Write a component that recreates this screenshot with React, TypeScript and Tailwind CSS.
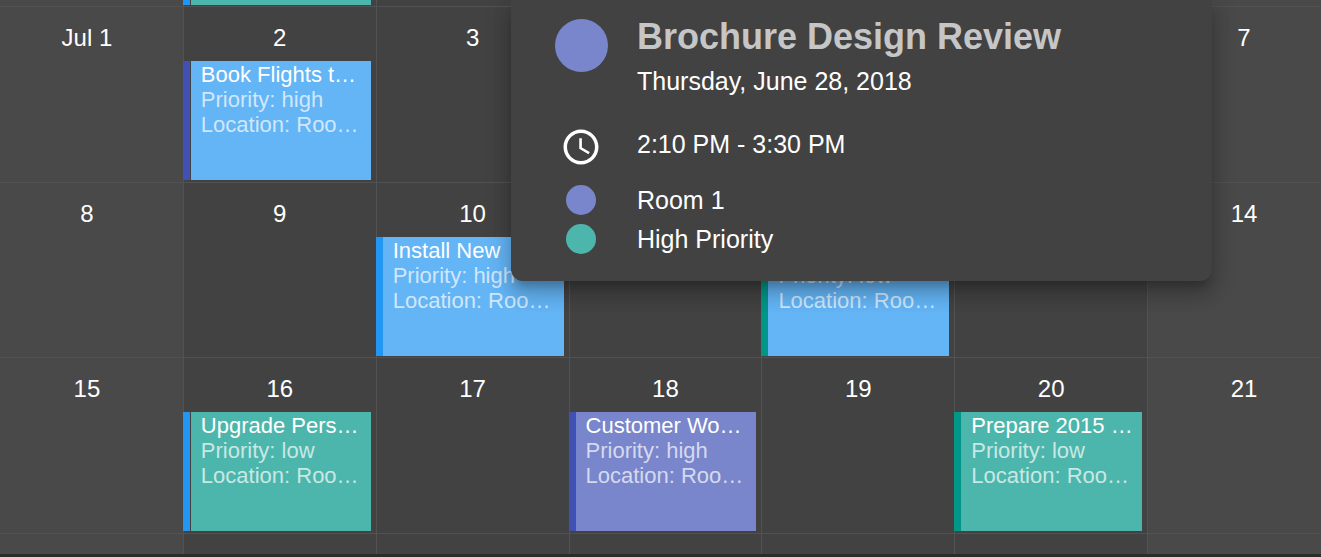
type Tone = 'blue' | 'indigo' | 'teal';

interface CalendarEvent {
  title?: string;
  priority: 'high' | 'low';
  location: string;
  body: Tone;
  bar: Tone;
  split?: boolean;
}

interface Day {
  label?: string;
  event?: CalendarEvent;
}

const bodyTone: Record<Tone, string> = {
  blue: 'bg-[#64b5f6]',
  indigo: 'bg-[#7986cb]',
  teal: 'bg-[#4db6ac]',
};

const barTone: Record<Tone, string> = {
  blue: 'bg-[#2196f3]',
  indigo: 'bg-[#3f51b5]',
  teal: 'bg-[#009688]',
};

const weeks: { height: string; days: Day[] }[] = [
  {
    height: 'h-[176px]',
    days: [
      { label: 'Jul 1' },
      {
        label: '2',
        event: { title: 'Book Flights t…', priority: 'high', location: 'Roo…', body: 'blue', bar: 'indigo', split: true },
      },
      { label: '3' },
      {},
      {},
      {},
      { label: '7' },
    ],
  },
  {
    height: 'h-[175px]',
    days: [
      { label: '8' },
      { label: '9' },
      { label: '10', event: { title: 'Install New', priority: 'high', location: 'Roo…', body: 'blue', bar: 'blue' } },
      {},
      { event: { priority: 'low', location: 'Roo…', body: 'blue', bar: 'teal' } },
      {},
      { label: '14' },
    ],
  },
  {
    height: 'h-[176px]',
    days: [
      { label: '15' },
      {
        label: '16',
        event: { title: 'Upgrade Pers…', priority: 'low', location: 'Roo…', body: 'teal', bar: 'blue', split: true },
      },
      { label: '17' },
      { label: '18', event: { title: 'Customer Wo…', priority: 'high', location: 'Roo…', body: 'indigo', bar: 'indigo' } },
      { label: '19' },
      { label: '20', event: { title: 'Prepare 2015 …', priority: 'low', location: 'Roo…', body: 'teal', bar: 'teal' } },
      { label: '21' },
    ],
  },
];

const columns = [0, 1, 2, 3, 4, 5, 6];

function cellTone(column: number) {
  return column === 0 || column === 6 ? 'bg-[#494949]' : 'bg-[#424242]';
}

function EventCard({ event }: { event: CalendarEvent }) {
  return (
    <div className={`-ml-px mr-[5px] flex h-[119px] ${event.split ? 'gap-px' : ''}`}>
      <div className={`w-[7px] shrink-0 ${barTone[event.bar]}`} />
      <div
        className={`min-w-0 flex-1 overflow-hidden whitespace-nowrap pl-2.5 pt-px text-[22px] leading-[25px] text-white/70 ${bodyTone[event.body]}`}
      >
        <p className="min-h-[25px] text-white">{event.title}</p>
        <p>Priority: {event.priority}</p>
        <p>Location: {event.location}</p>
      </div>
    </div>
  );
}

function MonthTable() {
  return (
    <div className="-ml-2.5 -mr-[19px]">
      <table className="w-full table-fixed border-separate border-spacing-0">
        <tbody>
          <tr>
            {columns.map((column) => (
              <td key={column} className={`h-1.5 border-l border-[#525252] p-0 align-top ${cellTone(column)}`}>
                {column === 1 && (
                  <div className="-ml-px mr-[5px] flex h-[5px] gap-px">
                    <div className="w-[7px] bg-[#2196f3]" />
                    <div className="flex-1 bg-[#4db6ac]" />
                  </div>
                )}
              </td>
            ))}
          </tr>
          {weeks.map((week) => (
            <tr key={week.days[0].label}>
              {week.days.map((day, column) => (
                <td
                  key={column}
                  className={`border-l border-t border-[#525252] p-0 pt-4 align-top ${week.height} ${cellTone(column)}`}
                >
                  <div className="mb-2 h-[30px] text-center text-2xl/[30px]">{day.label}</div>
                  {day.event && <EventCard event={day.event} />}
                </td>
              ))}
            </tr>
          ))}
          <tr>
            {columns.map((column) => (
              <td key={column} className={`h-[21px] border-l border-t border-[#525252] p-0 ${cellTone(column)}`} />
            ))}
          </tr>
        </tbody>
      </table>
    </div>
  );
}

function ClockIcon() {
  return (
    <svg viewBox="0 0 24 24" className="size-[42px] fill-current" aria-hidden="true">
      <path d="M11.99 2C6.47 2 2 6.48 2 12s4.47 10 9.99 10C17.52 22 22 17.52 22 12S17.52 2 11.99 2zM12 20c-4.42 0-8-3.58-8-8s3.58-8 8-8 8 3.58 8 8-3.58 8-8 8z" />
      <path d="M12.5 7H11v6l5.25 3.15.75-1.23-4.5-2.67z" />
    </svg>
  );
}

function Tooltip() {
  return (
    <section
      aria-label="Appointment details"
      className="absolute left-[511px] top-0 w-[701px] rounded-b-xl bg-[#424242] pb-[27px] pl-3.5 pt-[17px] text-[25px] leading-[30px] shadow-[0_9px_9px_-5px_rgba(0,0,0,0.2),0_14px_18px_2px_rgba(0,0,0,0.14),0_5px_24px_4px_rgba(0,0,0,0.12)]"
    >
      <div className="flex items-start">
        <div className="flex w-28 justify-center pt-0.5">
          <span className="size-[53px] rounded-full bg-[#7986cb]" />
        </div>
        <div>
          <h2 className="text-4xl/10 font-bold text-[#c6c6c6]">Brochure Design Review</h2>
          <p className="mt-[9px]">Thursday, June 28, 2018</p>
        </div>
      </div>
      <div className="mt-[30px] flex items-start">
        <div className="flex w-28 justify-center">
          <ClockIcon />
        </div>
        <p className="pt-[3px]">2:10 PM - 3:30 PM</p>
      </div>
      <div className="mt-[17px] flex flex-col gap-[9px]">
        <div className="flex items-center">
          <div className="flex w-28 justify-center">
            <span className="size-[30px] rounded-full bg-[#7986cb]" />
          </div>
          <p>Room 1</p>
        </div>
        <div className="flex items-center">
          <div className="flex w-28 justify-center">
            <span className="size-[30px] rounded-full bg-[#4db6ac]" />
          </div>
          <p>High Priority</p>
        </div>
      </div>
    </section>
  );
}

export default function App() {
  return (
    <main className="relative min-h-screen overflow-hidden bg-[#2c2c2c] font-['Liberation_Sans',Arial,sans-serif] text-white">
      <MonthTable />
      <Tooltip />
    </main>
  );
}
